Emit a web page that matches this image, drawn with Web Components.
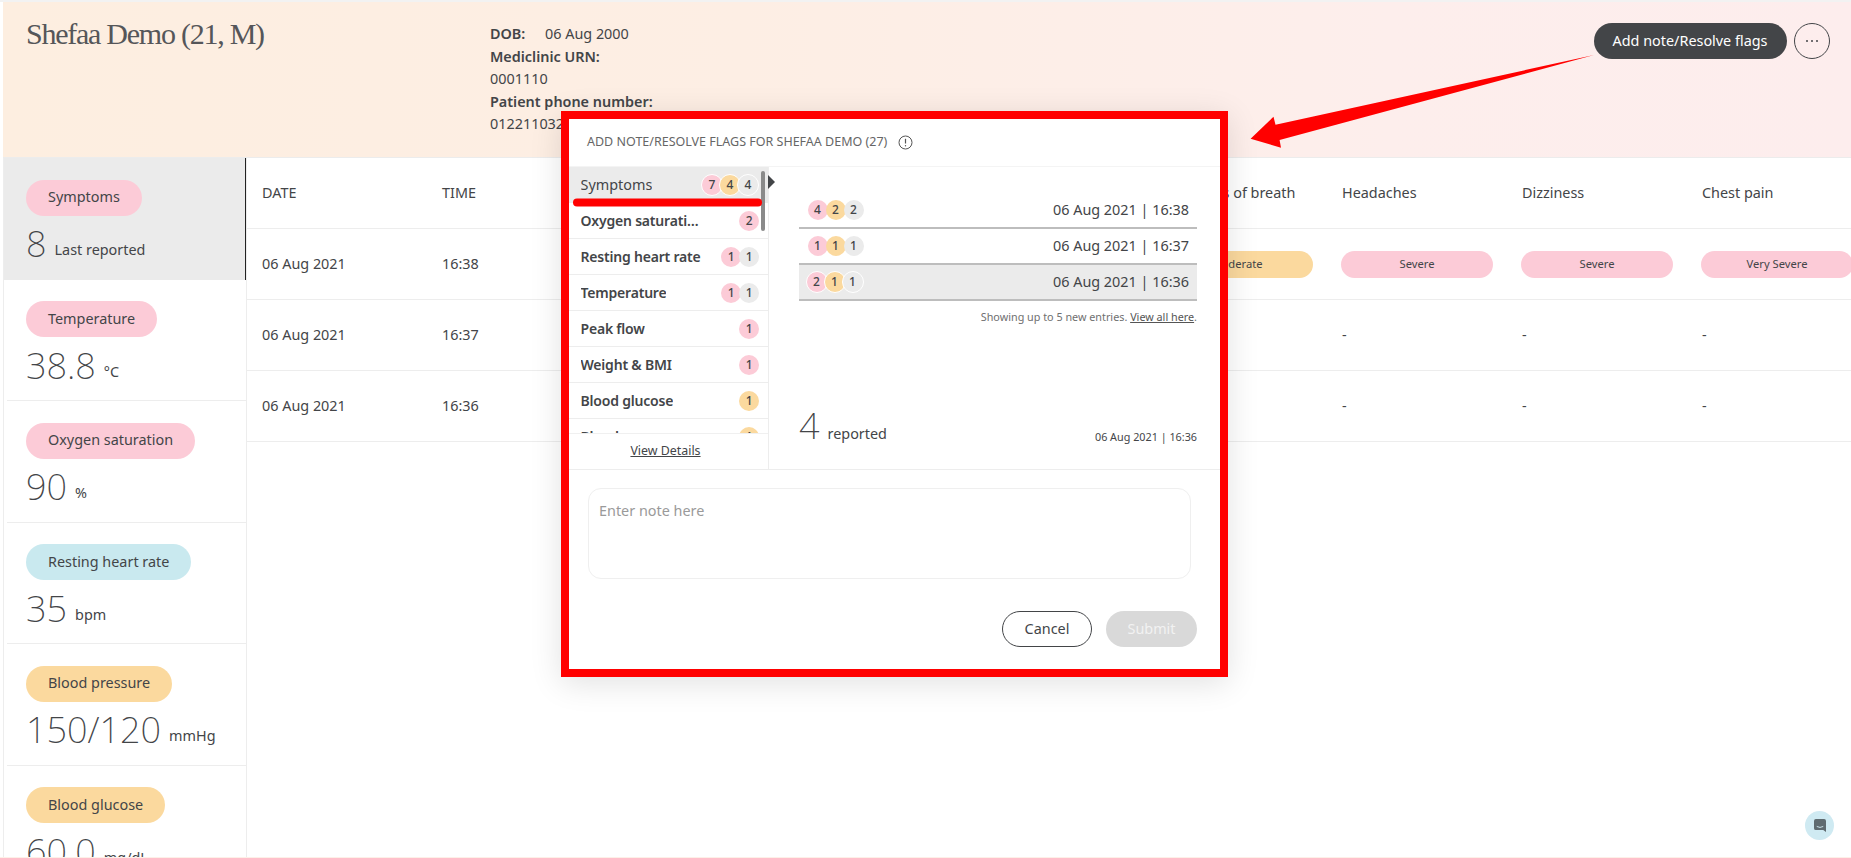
<!DOCTYPE html>
<html lang="en"><head><meta charset="utf-8"><title>Shefaa Demo</title>
<style>
html,body{margin:0;padding:0;background:#fff;overflow:hidden}
body{font-family:"Noto Sans",sans-serif;color:#434548}
</style></head><body>
<patient-app></patient-app>
<script>
const PALETTE={pink:'#fccbd7',orange:'#fbd99e',grey:'#ebebeb',blue:'#c9e9ef'};
function def(name,css,html,init){
  customElements.define(name,class extends HTMLElement{
    connectedCallback(){
      if(this.shadowRoot)return;
      const r=this.attachShadow({mode:'open'});
      r.innerHTML='<style>'+css+'</style>'+(typeof html==='function'?html(this):html);
      if(init)init(this,r);
    }
  });
}
def('flag-badges',`
:host{display:inline-flex;flex:none;align-items:center}
span{box-sizing:border-box;width:20px;height:20px;border-radius:50%;display:flex;align-items:center;justify-content:center;font:500 12px/1 "Noto Sans",sans-serif;color:#434548;margin-left:-2px;position:relative}
span:first-child{margin-left:0}
:host([ringed]) span{width:22px;height:22px;border:1px solid #fff;margin-left:-4px}
:host([ringed]) span:first-child{margin-left:0}
`,h=>{
  const tones=['pink','orange','grey'];const vals=(h.getAttribute('values')||'').split(',');
  return vals.map((v,i)=>{
    if(v==='')return '';
    return `<span style="background:${PALETTE[tones[i]]}">${v}</span>`;
  }).join('');
});
def('tone-pill',`
:host{display:inline-flex;align-items:center;justify-content:center;box-sizing:border-box;height:36px;padding:0 22px;border-radius:18px;font:400 14.4px/1 "Noto Sans",sans-serif;color:#434548;white-space:nowrap}
:host([small]){height:27px;width:152px;padding:0;border-radius:14px;font-size:11.2px;margin-left:-1px}
:host([tone=pink]){background:#fccbd7}:host([tone=orange]){background:#fbd99e}:host([tone=blue]){background:#c9e9ef}
`,'<slot></slot>');
def('vital-card',`
:host{display:block;box-sizing:border-box;height:121.5px;padding:21.5px 0 0 19px;margin-left:3px;position:relative;border-bottom:1px solid #ededed}
:host([active]){background:#ebebeb;margin-left:-1px;padding-left:23px;border-bottom:0;border-right:1px solid #222}
.v{display:flex;align-items:baseline;gap:8px;margin-top:4.5px;line-height:48px;white-space:nowrap}
b{font:200 36px/48px "Noto Sans",sans-serif;color:#434548}
i{font:400 14.4px/20px "Noto Sans",sans-serif;color:#434548;transform:translateY(-2px)}
.tip{display:none;position:absolute;right:-5px;top:54px;width:0;height:0;border-left:4px solid #111;border-top:12px solid transparent;border-bottom:12px solid transparent}
:host([active]) .tip{display:block}
`,h=>`<tone-pill tone="${h.getAttribute('tone')}"><slot></slot></tone-pill><div class="v"><b>${h.getAttribute('value')}</b><i>${h.getAttribute('unit')}</i></div><span class="tip"></span>`);
def('vital-list',`
:host{display:block;box-sizing:border-box;width:244px;flex:none;border-left:1px solid #ededed;border-right:1px solid #ededed;overflow:hidden}
`,'<slot></slot>');
def('data-row',`
:host{display:grid;grid-template-columns:repeat(9,180px);box-sizing:border-box;height:71px;padding-left:15px;align-items:center;border-bottom:1px solid #ededed;font:400 14.4px/20px "Noto Sans",sans-serif;color:#434548;white-space:nowrap}
`,'<slot></slot>');
def('data-table',`
:host{display:block;flex:1;min-width:0;overflow:hidden}
`,'<slot></slot>');
def('patient-header',`
:host{display:flex;box-sizing:border-box;height:156px;margin-left:3px;padding:21px 21px 0 23px;background:linear-gradient(90deg,#fdeee0 0%,#fdeee4 40%,#fdeeec 75%,#fdeded 100%);border-bottom:1px solid #ececec;color:#434548}
h1{margin:0;width:464px;flex:none;font:400 30px/22px "Liberation Serif",serif;letter-spacing:-1.25px;color:#555659}
.d{font:400 14.4px/22.5px "Noto Sans",sans-serif}
.d strong{font-weight:600}
.d .k{display:inline-block;width:55px}
.a{margin-left:auto;display:flex;gap:7.5px;align-items:flex-start}
button{font:400 14.4px/1 "Noto Sans",sans-serif;height:36px;border-radius:18px;box-sizing:border-box;cursor:pointer}
.p{width:193px;background:#434548;color:#fff;border:0;padding:0}
.m{width:36px;background:transparent;border:1px solid #434548;color:#434548;padding:0;display:flex;align-items:center;justify-content:center}
`,`<h1>Shefaa Demo (21, M)</h1>
<div class="d"><div><strong class="k">DOB:</strong>06 Aug 2000</div><div><strong>Mediclinic URN:</strong></div><div>0001110</div><div><strong>Patient phone number:</strong></div><div>0122110322</div></div>
<div class="a"><button class="p">Add note/Resolve flags</button><button class="m" aria-label="More"><svg width="14" height="4" viewBox="0 0 14 4"><circle cx="2" cy="2" r="1" fill="#434548"/><circle cx="7" cy="2" r="1" fill="#434548"/><circle cx="12" cy="2" r="1" fill="#434548"/></svg></button></div>`);
def('flag-item',`
:host{display:flex;box-sizing:border-box;height:36px;align-items:center;justify-content:space-between;padding:0 9px 0 11.5px;border-bottom:1px solid #ededed;font:600 14px/20px "Noto Sans",sans-serif;letter-spacing:-.2px;color:#434548}
:host([active]){background:#ebebeb;font-weight:400;font-size:14.4px;letter-spacing:0;border-bottom:0}
.t{white-space:nowrap;overflow:hidden;text-overflow:ellipsis;max-width:121px}
`,h=>`<span class="t"><slot></slot></span><flag-badges values="${h.getAttribute('flags')}" ${h.hasAttribute('active')?'ringed':''}></flag-badges>`);
def('entry-row',`
:host{display:flex;box-sizing:border-box;height:36px;align-items:center;justify-content:space-between;padding:0 8px 0 10.5px;border-bottom:2px solid #bdbdbd;font:400 14.4px/20px "Noto Sans",sans-serif;color:#434548}
:host([active]){background:#ebebeb}
`,h=>`<flag-badges values="${h.getAttribute('flags')}" ${h.hasAttribute('active')?'ringed':''}></flag-badges><span><slot></slot></span>`);
def('flag-modal',`
:host{display:block;position:absolute;left:561px;top:109px;width:667px;height:566px;box-sizing:border-box;border:8.5px solid #f00;background:#fff;box-shadow:0 6px 30px rgba(0,0,0,.12);color:#434548}
header{display:flex;align-items:center;gap:11px;height:48px;box-sizing:border-box;padding:0 0 0 18px;border-bottom:1px solid #f4f4f4;font:400 12.5px/1 "Noto Sans",sans-serif;color:#666;white-space:nowrap}
.main{display:flex;height:302px;border-bottom:1px solid #ededed}
.side{width:199px;flex:none;border-right:1px solid #ededed;display:flex;flex-direction:column;position:relative}
.scroll{height:266px;overflow:hidden}
.vd{flex:1;display:flex;align-items:center;justify-content:center;padding-right:6px;border-top:1px solid #f0f0f0;font:400 12.4px/1 "Noto Sans",sans-serif;color:#434548;text-decoration:underline}
.thumb{position:absolute;right:3px;top:4px;width:4px;height:60px;border-radius:2px;background:#8a8a8a}
.caret{position:absolute;right:-7px;top:8px;width:0;height:0;border-left:7px solid #434548;border-top:7.5px solid transparent;border-bottom:7.5px solid transparent}
.pane{flex:1;padding:26px 23px 0 30px;display:flex;flex-direction:column;min-width:0}
.note{margin:6px 0 0;text-align:right;font:400 10.8px/20px "Noto Sans",sans-serif;color:#6f6f6f;white-space:nowrap}
.note u{color:#555}
.sum{margin-top:auto;display:flex;align-items:baseline;justify-content:space-between;padding-bottom:23.5px}
.sum b{font:200 36px/40px "Noto Sans",sans-serif}
.sum i{font:400 14.4px/20px "Noto Sans",sans-serif;margin-left:8px}
.sum small{font:400 10.8px/16px "Noto Sans",sans-serif;color:#434548;transform:translateY(2px)}
.form{padding:18px 27px 0 19px}
.ta{box-sizing:border-box;width:603px;height:91px;border:1px solid #efefef;border-radius:13px;padding:12px 10px;font:400 14.4px/20px "Noto Sans",sans-serif;color:#9a9a9a}
.btns{display:flex;justify-content:flex-end;gap:14px;margin:32px -4px 0 0}
button{box-sizing:border-box;width:90px;height:36px;border-radius:18px;font:400 14.4px/1 "Noto Sans",sans-serif;padding:0}
.c{background:#fff;border:1px solid #434548;color:#434548}
.s{background:#d9d9d9;border:0;color:#f2f2f2;width:91px}
`,`<header><span>ADD NOTE/RESOLVE FLAGS FOR SHEFAA DEMO (27)</span><svg width="15" height="15" viewBox="0 0 15 15" fill="none" stroke="#555"><circle cx="7.5" cy="7.500" r="6.5"/><path d="M7.5 3.800v4.700" stroke-width="1.200"/><circle cx="7.5" cy="10.800" r=".7" fill="#555" stroke="none"/></svg></header>
<div class="main"><div class="side"><div class="scroll">
<flag-item active flags="7,4,4">Symptoms</flag-item>
<flag-item flags="2,,">Oxygen saturation</flag-item>
<flag-item flags="1,,1">Resting heart rate</flag-item>
<flag-item flags="1,,1">Temperature</flag-item>
<flag-item flags="1,,">Peak flow</flag-item>
<flag-item flags="1,,">Weight &amp; BMI</flag-item>
<flag-item flags=",1,">Blood glucose</flag-item>
<flag-item flags=",1,">Blood pressure</flag-item>
</div><div class="vd">View Details</div><span class="thumb"></span><span class="caret"></span></div>
<div class="pane">
<entry-row flags="4,2,2">06 Aug 2021 | 16:38</entry-row>
<entry-row flags="1,1,1">06 Aug 2021 | 16:37</entry-row>
<entry-row active flags="2,1,1">06 Aug 2021 | 16:36</entry-row>
<p class="note">Showing up to 5 new entries. <u>View all here</u>.</p>
<div class="sum"><div><b>4</b><i>reported</i></div><small>06 Aug 2021 | 16:36</small></div>
</div></div>
<div class="form"><div class="ta">Enter note here</div><div class="btns"><button class="c">Cancel</button><button class="s">Submit</button></div></div>`);
def('chat-launcher',`
:host{display:flex;position:absolute;left:1805px;top:809px;width:29px;height:29px;border-radius:50%;background:#cfeaf2;align-items:center;justify-content:center}
`,`<svg width="12" height="13" viewBox="0 0 13 14"><path d="M2 0h9a2 2 0 0 1 2 2v12l-3-2H2a2 2 0 0 1-2-2V2a2 2 0 0 1 2-2z" fill="#5f6b70"/><path d="M3 8q3.500 2.200 7 0" fill="none" stroke="#cfeaf2" stroke-width="1"/></svg>`);
def('patient-app',`
:host{display:block;position:relative;box-sizing:border-box;width:1851px;height:858px;overflow:hidden;background:#fff;border-top:2px solid #f2f2f2;border-bottom:1px solid #fdf0e8;font-family:"Noto Sans",sans-serif}
.body{display:flex;height:700px;padding-left:3px}
vital-list{height:700px}
svg.ann{position:absolute;left:0;top:-2px;width:1851px;height:858px;pointer-events:none;z-index:3}
flag-modal{z-index:2}
`,`<patient-header></patient-header>
<div class="body"><vital-list>
<vital-card active tone="pink" value="8" unit="Last reported">Symptoms</vital-card>
<vital-card tone="pink" value="38.8" unit="°C">Temperature</vital-card>
<vital-card tone="pink" value="90" unit="%">Oxygen saturation</vital-card>
<vital-card tone="blue" value="35" unit="bpm">Resting heart rate</vital-card>
<vital-card tone="orange" value="150/120" unit="mmHg">Blood pressure</vital-card>
<vital-card tone="orange" value="60.0" unit="mg/dL">Blood glucose</vital-card>
</vital-list>
<data-table>
<data-row><span>DATE</span><span>TIME</span><span></span><span></span><span></span><span>Shortness of breath</span><span>Headaches</span><span>Dizziness</span><span>Chest pain</span></data-row>
<data-row><span>06 Aug 2021</span><span>16:38</span><span></span><span></span><span></span><tone-pill small tone="orange">Moderate</tone-pill><tone-pill small tone="pink">Severe</tone-pill><tone-pill small tone="pink">Severe</tone-pill><tone-pill small tone="pink">Very Severe</tone-pill></data-row>
<data-row><span>06 Aug 2021</span><span>16:37</span><span></span><span></span><span></span><span></span><span>-</span><span>-</span><span>-</span></data-row>
<data-row><span>06 Aug 2021</span><span>16:36</span><span></span><span></span><span></span><span></span><span>-</span><span>-</span><span>-</span></data-row>
</data-table></div>
<flag-modal></flag-modal>
<svg class="ann" viewBox="0 0 1851 858"><polygon fill="#f00" points="1594,55 1275.500,124.700 1273.500,116.700 1250.600,138.700 1281,147.700 1279.600,140"/><path d="M577 202.500H758" stroke="#f00" stroke-width="8" stroke-linecap="round"/></svg>
<chat-launcher></chat-launcher>`);
</script>
</body></html>
